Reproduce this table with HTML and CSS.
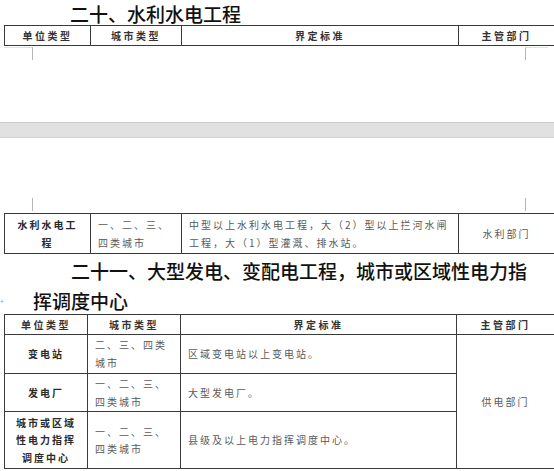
FILE: index.html
```
<!DOCTYPE html>
<html lang="zh-CN">
<head>
<meta charset="utf-8">
<title>二十、水利水电工程</title>
<link rel="stylesheet" href="styles.css">
</head>
<body>
<div class="page page1">
  <h1 class="title t1">二十、水利水电工程</h1>
  <table class="grid g1">
    <colgroup><col class="c1"><col class="c2"><col class="c3"><col class="c4"></colgroup>
    <tr class="head"><th>单位类型</th><th>城市类型</th><th>界定标准</th><th>主管部门</th></tr>
  </table>
  <div class="marks marks-bottom"><span class="mk mk-l"></span><span class="mk mk-r"></span></div>
</div>
<div class="page-gap"></div>
<div class="page page2">
  <div class="marks marks-top"><span class="mk mk-l"></span><span class="mk mk-r"></span></div>
  <table class="grid g1">
    <colgroup><col class="c1"><col class="c2"><col class="c3"><col class="c4"></colgroup>
    <tr class="r-a">
      <td class="name">水利水电工程</td>
      <td class="txt">一、二、三、四类城市</td>
      <td class="txt">中型以上水利水电工程，大（2）型以上拦河水闸工程，大（1）型灌溉、排水站。</td>
      <td class="dept">水利部门</td>
    </tr>
  </table>
  <div class="title t2">
    <div class="l1">二十一、大型发电、变配电工程，城市或区域性电力指</div>
    <div class="l2"><span class="pmark">+</span><span>挥调度中心</span></div>
  </div>
  <table class="grid g2">
    <colgroup><col class="c1"><col class="c2"><col class="c3"><col class="c4"></colgroup>
    <tr class="head"><th>单位类型</th><th>城市类型</th><th>界定标准</th><th>主管部门</th></tr>
    <tr class="r-b">
      <td class="name">变电站</td>
      <td class="txt">二、三、四类城市</td>
      <td class="txt">区域变电站以上变电站。</td>
      <td class="dept" rowspan="3">供电部门</td>
    </tr>
    <tr class="r-c">
      <td class="name">发电厂</td>
      <td class="txt">一、二、三、四类城市</td>
      <td class="txt">大型发电厂。</td>
    </tr>
    <tr class="r-d">
      <td class="name">城市或区域性电力指挥调度中心</td>
      <td class="txt">一、二、三、四类城市</td>
      <td class="txt">县级及以上电力指挥调度中心。</td>
    </tr>
  </table>
</div>
</body>
</html>
```

FILE: styles.css
```
* { box-sizing: border-box; }
html, body {
  margin: 0;
  padding: 0;
  background: #ffffff;
  font-family: "Noto Sans CJK SC", "Noto Sans", sans-serif;
  color: #000;
}
.page1 { height: 122px; overflow: hidden; }
.page2 { height: 333px; overflow: hidden; }
.page-gap {
  height: 16px;
  background: #e1e1e1;
  border-top: 1px solid #cecece;
  border-bottom: 1px solid #d2d2d2;
}
.title {
  margin: 0;
  font-size: 19px;
  font-weight: 500;
  color: #111;
  white-space: nowrap;
}
.t1 {
  height: 25px;
  line-height: 27px;
  padding-left: 70px;
}
.t2 {
  height: 60px;
  padding-top: 2px;
}
.t2 .l1 {
  height: 30px;
  line-height: 30px;
  padding-left: 71px;
}
.t2 .l2 {
  display: flex;
  height: 28px;
  line-height: 30px;
}
.pmark {
  width: 33px;
  font-size: 7px;
  color: #aaa;
  line-height: 30px;
}
.grid {
  border-collapse: collapse;
  table-layout: fixed;
  margin-left: 4px;
  width: 550px;
  font-size: 10px;
}
.grid th, .grid td {
  border: 1px solid #3a3a3a;
  padding: 0;
  vertical-align: middle;
}
.grid th {
  height: 20px;
  font-weight: 700;
  color: #333;
  letter-spacing: 2.5px;
  text-align: center;
  line-height: 18px;
}
.g1 .c1 { width: 86px; }
.g1 .c2 { width: 91px; }
.g1 .c3 { width: 277px; }
.g1 .c4 { width: 96px; }
.g2 .c1 { width: 83px; }
.g2 .c2 { width: 93px; }
.g2 .c3 { width: 276px; }
.g2 .c4 { width: 98px; }
.grid td {
  line-height: 18px;
  letter-spacing: 2px;
  color: #5a5a5a;
}
.grid td.name {
  font-weight: 700;
  color: #2a2a2a;
  text-align: center;
  padding: 0 8px;
}
.grid td.txt {
  text-align: left;
  padding: 0 6px 0 7px;
}
.grid td.dept {
  text-align: center;
}
.r-a td { height: 40px; }
.r-b td { height: 39px; }
.r-c td { height: 38px; }
.r-d td { height: 57px; line-height: 17.5px; }
.marks {
  display: flex;
  justify-content: space-between;
}
.marks-bottom { margin-top: 1px; height: 13px; }
.marks-bottom .mk-l {
  margin-left: 4px;
  width: 29px;
  height: 13px;
  border-top: 1px solid #e2e2e2;
  border-right: 1px solid #b5b5b5;
}
.marks-bottom .mk-r {
  margin-right: 6px;
  width: 23px;
  height: 13px;
  border-top: 1px solid #e2e2e2;
  border-left: 1px solid #b5b5b5;
}
.marks-top { padding-top: 60px; height: 73px; margin-bottom: 2px; }
.marks-top .mk-l {
  margin-left: 32px;
  width: 1px;
  height: 13px;
  background: #b5b5b5;
}
.marks-top .mk-r {
  margin-right: 28px;
  width: 1px;
  height: 13px;
  background: #b5b5b5;
}
```
